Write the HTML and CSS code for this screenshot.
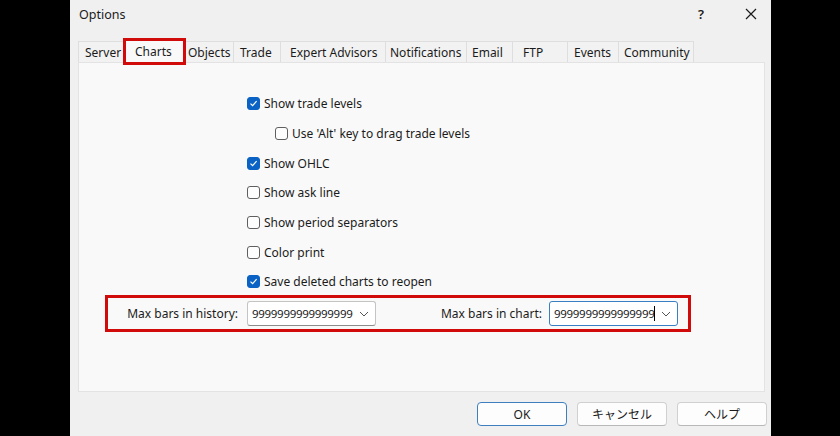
FILE: index.html
```html
<!DOCTYPE html>
<html>
<head>
<meta charset="utf-8">
<link rel="stylesheet" href="styles.css">
</head>
<body>
<div class="dialog">
  <div class="titlebar">
    <span class="title">Options</span>
    <span class="help">?</span>
    <span class="close"><svg width="12" height="12" viewBox="0 0 12 12"><path d="M1 1L11 11M11 1L1 11" stroke="#1a1a1a" stroke-width="1.2" fill="none"/></svg></span>
  </div>
  <div class="tabs">
    <div class="tab t-server">Server</div>
    <div class="tab sel t-charts">Charts<span class="redbox"></span></div>
    <div class="tab t-objects">Objects</div>
    <div class="tab t-trade">Trade</div>
    <div class="tab t-ea">Expert Advisors</div>
    <div class="tab t-notif">Notifications</div>
    <div class="tab t-email">Email</div>
    <div class="tab t-ftp">FTP</div>
    <div class="tab t-events">Events</div>
    <div class="tab t-comm">Community</div>
  </div>
  <div class="panel">
    <div class="checks">
      <label class="row"><span class="cb on"><svg width="9" height="9" viewBox="0 0 9 9"><path d="M1.5 4.6L3.6 6.6L7.6 2.2" stroke="#fff" stroke-width="1.2" fill="none"/></svg></span>Show trade levels</label>
      <label class="row sub"><span class="cb"></span>Use 'Alt' key to drag trade levels</label>
      <label class="row"><span class="cb on"><svg width="9" height="9" viewBox="0 0 9 9"><path d="M1.5 4.6L3.6 6.6L7.6 2.2" stroke="#fff" stroke-width="1.2" fill="none"/></svg></span>Show OHLC</label>
      <label class="row"><span class="cb"></span>Show ask line</label>
      <label class="row"><span class="cb"></span>Show period separators</label>
      <label class="row"><span class="cb"></span>Color print</label>
      <label class="row"><span class="cb on"><svg width="9" height="9" viewBox="0 0 9 9"><path d="M1.5 4.6L3.6 6.6L7.6 2.2" stroke="#fff" stroke-width="1.2" fill="none"/></svg></span>Save deleted charts to reopen</label>
    </div>
    <div class="maxrow">
      <span class="lbl l1">Max bars in history:</span>
      <div class="combo"><span class="val">9999999999999999</span><svg class="chev" width="10" height="6" viewBox="0 0 10 6"><path d="M1 1L5 5L9 1" stroke="#555" stroke-width="1" fill="none"/></svg></div>
      <span class="lbl l2">Max bars in chart:</span>
      <div class="combo focus"><span class="val">9999999999999999</span><span class="caret"></span><svg class="chev" width="10" height="6" viewBox="0 0 10 6"><path d="M1 1L5 5L9 1" stroke="#555" stroke-width="1" fill="none"/></svg></div>
    </div>
  </div>
  <div class="footer">
    <button class="btn def">OK</button>
    <button class="btn">キャンセル</button>
    <button class="btn">ヘルプ</button>
  </div>
</div>
</body>
</html>
```
FILE: styles.css
```css
html, body { margin: 0; padding: 0; }
body {
  background: #000;
  width: 840px;
  height: 436px;
  overflow: hidden;
  font-family: "Noto Sans", "Noto Sans CJK JP", sans-serif;
  font-size: 12px;
  color: #1b1b1b;
}
.dialog {
  margin-left: 70px;
  width: 701px;
  height: 436px;
  background: #f0f0f0;
  display: flex;
  flex-direction: column;
}
.titlebar {
  height: 28px;
  display: flex;
  align-items: center;
  padding-left: 9px;
}
.title { font-size: 12.5px; flex: 1; }
.help { font-size: 13px; font-weight: 600; width: 14px; margin-right: 37px; text-align: center; }
.close { width: 12px; height: 12px; margin-right: 14px; display: flex; }
.tabs {
  margin-top: 10px;
  margin-left: 8px;
  height: 24px;
  display: flex;
  align-items: flex-end;
  position: relative;
}
.tab {
  height: 21px;
  box-sizing: border-box;
  border: 1px solid #dedede;
  border-bottom: none;
  margin-right: -1px;
  background: #f2f2f2;
  display: flex;
  align-items: center;
  padding-left: 6px;
  white-space: nowrap;
  position: relative;
}
.tab.sel {
  background: #f9f9f9;
  padding-left: 11px;
  z-index: 1;
  margin-bottom: -1px;
  height: 25px;
}
.t-server { width: 46px; }
.t-charts { width: 63px; }
.t-objects { width: 49px; padding-left: 2px; }
.t-trade { width: 48px; }
.t-ea { width: 106px; padding-left: 9px; }
.t-notif { width: 82px; padding-left: 4px; }
.t-email { width: 47px; padding-left: 5px; }
.t-ftp { width: 56px; padding-left: 10px; }
.t-events { width: 52px; }
.t-comm { width: 76px; padding-left: 5px; }
.redbox {
  position: absolute;
  left: -1px;
  top: -1px;
  width: 63px;
  height: 27px;
  box-sizing: border-box;
  border: 3px solid #d10a0a;
}
.panel {
  margin-left: 8px;
  width: 687px;
  height: 330px;
  box-sizing: border-box;
  background: #f9f9f9;
  border: 1px solid #e3e3e3;
  padding-top: 26px;
}
.checks {
  display: flex;
  flex-direction: column;
  padding-left: 168px;
}
.row {
  height: 29.7px;
  display: flex;
  align-items: center;
  white-space: nowrap;
}
.row.sub { padding-left: 28px; }
.cb {
  width: 13px;
  height: 13px;
  box-sizing: border-box;
  border: 1px solid #5f5f5f;
  border-radius: 3px;
  background: #fdfdfd;
  margin-right: 4px;
  display: flex;
  align-items: center;
  justify-content: center;
}
.cb.on { background: #0a63c4; border-color: #0a63c4; }
.maxrow {
  margin-left: 26px;
  margin-top: -2px;
  width: 586px;
  height: 37px;
  box-sizing: border-box;
  border: 3px solid #d10a0a;
  display: flex;
  align-items: center;
}
.lbl { text-align: right; white-space: nowrap; }
.l1 { width: 130px; margin-right: 9px; }
.l2 { width: 166px; margin-right: 7px; }
.combo {
  width: 129px;
  height: 25px;
  box-sizing: border-box;
  border: 1px solid #c4c4c4;
  border-bottom-color: #8c8c8c;
  border-radius: 3px;
  background: #fff;
  display: flex;
  align-items: center;
  padding-left: 4px;
  position: relative;
  font-size: 11.5px;
}
.combo.focus { border: 1px solid #3a7fc1; }
.val { letter-spacing: -0.3px; }
.caret { width: 1px; height: 15px; background: #000; }
.chev { position: absolute; right: 6px; top: 9px; }
.footer {
  display: flex;
  justify-content: flex-end;
  padding-right: 4px;
  margin-top: 10px;
  gap: 10px;
}
.btn {
  width: 90px;
  height: 24px;
  box-sizing: border-box;
  background: #fdfdfd;
  border: 1px solid #d0d0d0;
  border-bottom-color: #b8b8b8;
  border-radius: 4px;
  font-family: "Noto Sans", "Noto Sans CJK JP", sans-serif;
  font-size: 12px;
  color: #1b1b1b;
  padding: 0;
}
.btn.def { border: 1px solid #3f7fbf; }
```
